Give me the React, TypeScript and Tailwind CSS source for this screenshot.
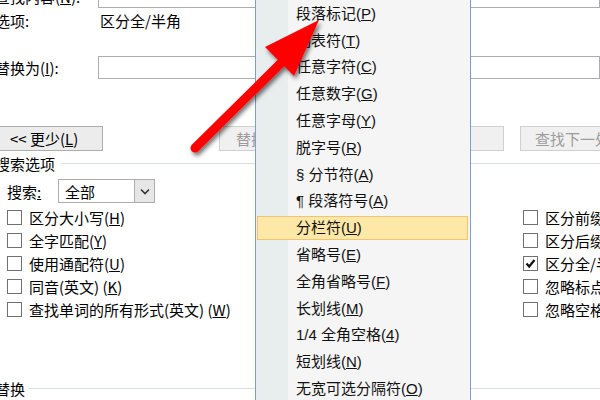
import React from 'react';

const MENU_ITEMS: { pre?: string; label: string; key: string; active?: boolean }[] = [
  { label: '段落标记', key: 'P' },
  { label: '制表符', key: 'T' },
  { label: '任意字符', key: 'C' },
  { label: '任意数字', key: 'G' },
  { label: '任意字母', key: 'Y' },
  { label: '脱字号', key: 'R' },
  { pre: '§ ', label: '分节符', key: 'A' },
  { pre: '¶ ', label: '段落符号', key: 'A' },
  { label: '分栏符', key: 'U', active: true },
  { label: '省略号', key: 'E' },
  { label: '全角省略号', key: 'F' },
  { label: '长划线', key: 'M' },
  { pre: '1/4 ', label: '全角空格', key: '4' },
  { label: '短划线', key: 'N' },
  { label: '无宽可选分隔符', key: 'O' },
];

const LEFT_CHECKS = [
  { label: '区分大小写', key: 'H' },
  { label: '全字匹配', key: 'Y' },
  { label: '使用通配符', key: 'U' },
  { label: '同音(英文) ', key: 'K' },
  { label: '查找单词的所有形式(英文) ', key: 'W' },
];

const RIGHT_CHECKS = [
  { label: '区分前缀', key: 'X' },
  { label: '区分后缀', key: 'T' },
  { label: '区分全/半角', key: 'M', checked: true },
  { label: '忽略标点符号', key: 'S' },
  { label: '忽略空格', key: 'W' },
];

function Check({ label, k, checked }: { label: string; k: string; checked?: boolean }) {
  return (
    <div className="flex items-center h-[23px] gap-[7px]">
      <div className="w-[15px] h-[15px] border border-[#707070] bg-white flex items-center justify-center shrink-0">
        {checked && (
          <svg width="11" height="11" viewBox="0 0 11 11">
            <path d="M1.5 5.5 L4.2 8.5 L9.5 2" fill="none" stroke="#111" strokeWidth="2.2" />
          </svg>
        )}
      </div>
      <span className="whitespace-nowrap">
        {label}(<span className="underline">{k}</span>)
      </span>
    </div>
  );
}

export default function App() {
  return (
    <div className="relative w-[600px] h-[400px] overflow-hidden bg-white text-black text-[15px] leading-none font-['Noto_Sans_CJK_SC',sans-serif]">
      {/* dialog */}
      <div className="ml-[-5px]">
        {/* find what */}
        <div className="flex items-center h-[24px] mt-[-16px]">
          <div className="w-[103px] shrink-0 whitespace-nowrap">查找内容(<span className="underline">N</span>):</div>
          <div className="flex-1 h-full border border-[#abadb3] bg-white" />
        </div>
        <div className="flex items-center h-[24px]">
          <div className="w-[105px] shrink-0">选项:</div>
          <div>区分全/半角</div>
        </div>
        {/* replace with */}
        <div className="flex items-center h-[23px] mt-[24px]">
          <div className="w-[103px] shrink-0 whitespace-nowrap">替换为(<span className="underline">I</span>):</div>
          <div className="flex-1 h-full border border-[#abadb3] bg-white" />
        </div>

        {/* buttons */}
        <div className="flex h-[25px] mt-[47px]">
          <div className="shrink-0 ml-[-5px] w-[113px] flex items-center pl-[19px] border border-[#adadad] bg-[#ececec] whitespace-nowrap">
            &lt;&lt; 更少(<span className="underline">L</span>)
          </div>
          <div className="shrink-0 ml-[116px] w-[85px] flex items-center pl-[16px] border border-[#d0d0d0] bg-[#f0f0f0] text-[#9c9c9c] whitespace-nowrap">
            替换(R)
          </div>
          <div className="shrink-0 ml-[105px] w-[95px] border border-[#d0d0d0] bg-[#f0f0f0]" />
          <div className="shrink-0 ml-[16px] w-[110px] flex items-center pl-[14px] border border-[#d0d0d0] bg-[#f0f0f0] text-[#9c9c9c] whitespace-nowrap">
            查找下一处(F)
          </div>
        </div>

        {/* search options group */}
        <div className="flex items-center h-[16px] mt-[4px]">
          <span className="whitespace-nowrap">搜索选项</span>
          <div className="flex-1 h-px ml-[6px] bg-[#dadfe3]" />
        </div>
        <div className="flex mt-[8px]">
          <div className="w-[528px] shrink-0 pl-[12px]">
            <div className="flex items-center h-[24px]">
              <span className="w-[51px] shrink-0">
                搜索<span className="underline">:</span>
              </span>
              <div className="w-[97px] h-full border border-[#acacac] flex items-center">
                <span className="flex-1 pl-[6px]">全部</span>
                <div className="w-[20px] h-full border-l border-[#acacac] bg-[#e6e6e6] flex items-center justify-center">
                  <svg width="10" height="7" viewBox="0 0 10 7">
                    <path d="M1 1.5 L5 5.5 L9 1.5" fill="none" stroke="#333" strokeWidth="1.6" />
                  </svg>
                </div>
              </div>
            </div>
            <div className="mt-[3px]">
              {LEFT_CHECKS.map((c) => (
                <Check key={c.label} label={c.label} k={c.key} />
              ))}
            </div>
          </div>
          <div className="flex-1 min-w-0 pt-[27px]">
            {RIGHT_CHECKS.map((c) => (
              <Check key={c.label} label={c.label} k={c.key} checked={c.checked} />
            ))}
          </div>
        </div>

        {/* replace group */}
        <div className="flex items-center h-[16px] mt-[59px]">
          <span className="whitespace-nowrap">替换</span>
          <div className="flex-1 h-px ml-[4px] bg-[#dadfe3]" />
        </div>
      </div>

      {/* special menu */}
      <div className="absolute left-[255px] top-[-2px] w-[216px] h-[420px] border border-[#7f9dc9] bg-[linear-gradient(to_right,#e8edee_32px,#f5f5f5_32px)] text-[15px] text-[#111] font-['Liberation_Sans','Noto_Sans_CJK_SC',sans-serif]">
        <div className="pt-[1px]">
          {MENU_ITEMS.map((it) => (
            <div key={it.label} className="h-[26.8px] flex items-center pl-px pr-[2px]">
              <div
                className={`w-full h-[24px] flex items-center pl-[38px] border ${
                  it.active ? 'bg-[#fee8a7] border-[#f2c46c]' : 'border-transparent'
                }`}
              >
                <span className="whitespace-nowrap">
                  {it.pre}
                  {it.label}(<span className="underline">{it.key}</span>)
                </span>
              </div>
            </div>
          ))}
        </div>
      </div>

      {/* red arrow */}
      <svg className="absolute inset-0 pointer-events-none" width="600" height="400" viewBox="0 0 600 400">
        <defs>
          <filter id="sh" x="-20%" y="-20%" width="140%" height="140%">
            <feDropShadow dx="2" dy="3" stdDeviation="2" floodColor="#000" floodOpacity="0.55" />
          </filter>
        </defs>
        <g filter="url(#sh)">
          <line x1="195" y1="148" x2="284" y2="60" stroke="#ff0000" strokeWidth="9" strokeLinecap="round" />
          <polygon points="319,20 265,47 294,76" fill="#ff0000" />
        </g>
      </svg>
    </div>
  );
}
